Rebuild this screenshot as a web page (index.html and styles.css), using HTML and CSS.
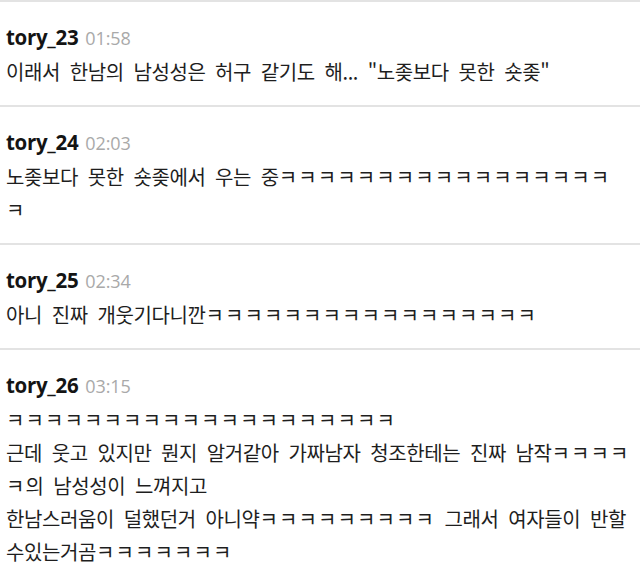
FILE: index.html
```html
<!DOCTYPE html>
<html lang="ko">
<head>
<meta charset="utf-8">
<link rel="stylesheet" href="styles.css">
</head>
<body>
<div class="list">
  <div class="item">
    <div class="head"><span class="name">tory_23</span><span class="time">01:58</span></div>
    <div class="body">이래서 한남의 남성성은 허구 같기도 해... "노좆보다 못한 숏좆"</div>
  </div>
  <div class="item">
    <div class="head"><span class="name">tory_24</span><span class="time">02:03</span></div>
    <div class="body">노좆보다 못한 숏좆에서 우는 중<span class="k">ㅋㅋㅋㅋㅋㅋㅋㅋㅋㅋㅋㅋㅋㅋㅋㅋㅋ</span><br><span class="k">ㅋ</span></div>
  </div>
  <div class="item">
    <div class="head"><span class="name">tory_25</span><span class="time">02:34</span></div>
    <div class="body">아니 진짜 개웃기다니깐<span class="k">ㅋㅋㅋㅋㅋㅋㅋㅋㅋㅋㅋㅋㅋㅋㅋㅋㅋ</span></div>
  </div>
  <div class="item">
    <div class="head"><span class="name">tory_26</span><span class="time">03:15</span></div>
    <div class="body"><span class="k">ㅋㅋㅋㅋㅋㅋㅋㅋㅋㅋㅋㅋㅋㅋㅋㅋㅋㅋㅋㅋ</span><br>근데 웃고 있지만 뭔지 알거같아 가짜남자 청조한테는 진짜 남작<span class="k">ㅋㅋㅋㅋ</span><br><span class="k">ㅋ</span>의 남성성이 느껴지고<br>한남스러움이 덜했던거 아니약<span class="k">ㅋㅋㅋㅋㅋㅋㅋㅋㅋ</span> 그래서 여자들이 반할<br>수있는거곰<span class="k">ㅋㅋㅋㅋㅋㅋㅋ</span></div>
  </div>
</div>
</body>
</html>
```

FILE: styles.css
```css
html, body {
  margin: 0;
  padding: 0;
  background: #ffffff;
}

.list {
  display: flex;
  flex-direction: column;
}

.item {
  border-top: 2px solid #e3e3e3;
  padding: 21px 6px 17px 6px;
}

.head {
  display: flex;
  align-items: baseline;
  gap: 7px;
  height: 28px;
  line-height: 28px;
}

.name {
  font-family: "Open Sans", "Noto Sans", sans-serif;
  font-weight: 700;
  font-size: 20.5px;
  color: #141414;
  letter-spacing: -0.3px;
}

.time {
  font-family: "Open Sans", "Noto Sans", sans-serif;
  font-size: 18px;
  color: #a9a9a9;
  letter-spacing: -0.1px;
}

.body {
  margin-top: 4px;
  font-family: "Noto Sans CJK KR", "Noto Sans", sans-serif;
  font-size: 20px;
  line-height: 33px;
  color: #1e1e1e;
  letter-spacing: -0.4px;
  word-spacing: 4.5px;
  white-space: nowrap;
}

.k {
  letter-spacing: 1.1px;
}
```
